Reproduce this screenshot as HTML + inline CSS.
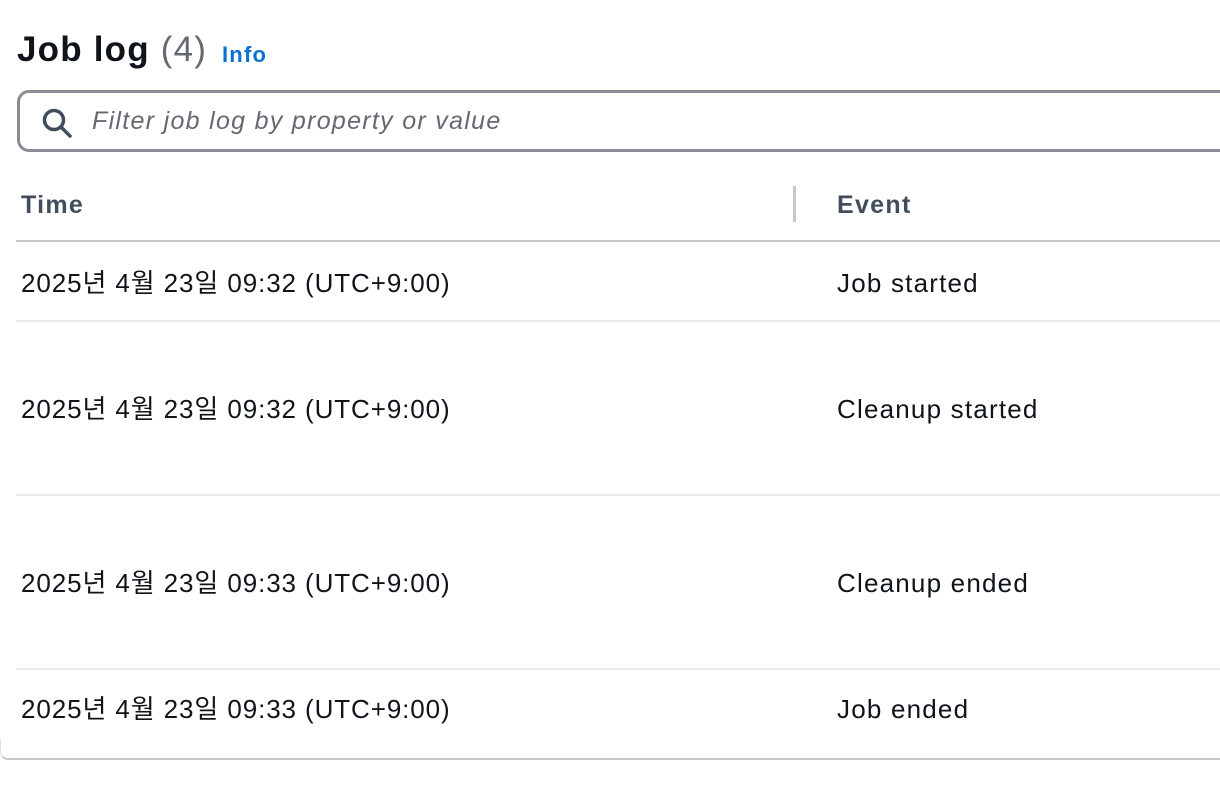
<!DOCTYPE html>
<html><head><meta charset="utf-8"><style>
body{margin:0;width:1220px;height:786px;background:#fff;font-family:"Liberation Sans","Noto Sans CJK KR",sans-serif;color:#0f141a;overflow:hidden;position:relative}
.a{position:absolute;white-space:nowrap}
.title{left:17px;top:30px;font-size:35px;font-weight:bold;letter-spacing:1.2px}
.title span{font-weight:normal;color:#656871}
.info{left:222px;top:42px;font-size:22px;font-weight:bold;color:#0972d3;letter-spacing:1.2px}
.search{position:absolute;left:17px;top:90px;width:1220px;height:62px;border:3px solid #8c8c94;border-radius:12px;box-sizing:border-box}
.ph{left:92px;top:107px;font-size:25px;font-style:italic;color:#656871;letter-spacing:1.3px}
.hd{font-size:25px;font-weight:bold;color:#414d5c;top:191px;letter-spacing:1.3px}
.line{position:absolute;left:16px;right:0;height:2px;background:#e9ebed}
.cell{font-size:26px;line-height:30px;height:30px}
.d{letter-spacing:0.9px}
.e{letter-spacing:1.2px}
</style></head><body>
<div class="a title">Job log <span>(4)</span></div>
<div class="a info">Info</div>
<div class="search"></div>
<svg class="a" style="left:40px;top:106px" width="34" height="34" viewBox="0 0 34 34"><circle cx="14" cy="14" r="9.5" fill="none" stroke="#414d5c" stroke-width="3.5"/><line x1="21" y1="21" x2="30" y2="30" stroke="#414d5c" stroke-width="3.5" stroke-linecap="round"/></svg>
<div class="a ph">Filter job log by property or value</div>
<div class="a hd" style="left:21px">Time</div>
<div class="a" style="left:793px;top:186px;width:3px;height:36px;background:#c6c6cd"></div>
<div class="a hd" style="left:837px">Event</div>
<div class="line" style="top:240px;background:#c6c6cd"></div>
<div class="a cell d" style="left:21px;top:268px">2025년 4월 23일 09:32 (UTC+9:00)</div>
<div class="a cell e" style="left:837px;top:268px">Job started</div>
<div class="line" style="top:320px"></div>
<div class="a cell d" style="left:21px;top:394px">2025년 4월 23일 09:32 (UTC+9:00)</div>
<div class="a cell e" style="left:837px;top:394px">Cleanup started</div>
<div class="line" style="top:494px"></div>
<div class="a cell d" style="left:21px;top:568px">2025년 4월 23일 09:33 (UTC+9:00)</div>
<div class="a cell e" style="left:837px;top:568px">Cleanup ended</div>
<div class="line" style="top:668px"></div>
<div class="a cell d" style="left:21px;top:694px">2025년 4월 23일 09:33 (UTC+9:00)</div>
<div class="a cell e" style="left:837px;top:694px">Job ended</div>
<div class="a" style="left:0;top:740px;width:1240px;height:18px;border-bottom:2px solid #c6c6cd;border-left:1px solid #e0e0e4;border-bottom-left-radius:8px"></div>
</body></html>
